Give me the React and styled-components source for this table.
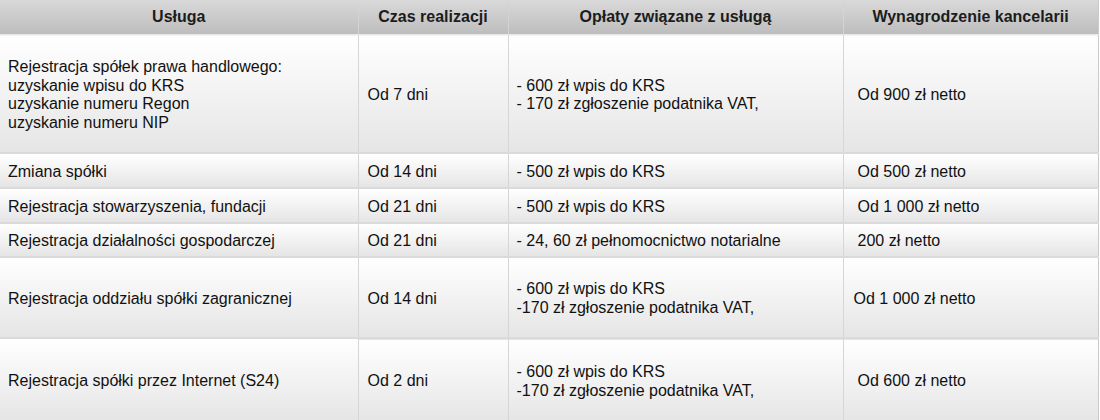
import React from 'react';
import styled, { createGlobalStyle } from 'styled-components';

const GlobalStyle = createGlobalStyle`
  body {
    margin: 0;
    background: #fff;
    font-family: "Liberation Sans", Arial, sans-serif;
  }
`;

const Table = styled.table`
  width: 1098px;
  border-collapse: collapse;
  table-layout: fixed;
  font-size: 16px;
  line-height: 18.7px;
  color: #111;
`;

const HeadCell = styled.th`
  height: 34px;
  padding: 0;
  font-weight: bold;
  text-align: center;
  color: #1c1c1c;
  background: linear-gradient(to bottom, #d9d9d9 0%, #bdbdbd 100%);
  border-right: 1px solid #d4d4d4;
  border-bottom: 1px solid #e9e9e9;
  &:last-child {
    border-right: 1px solid #c9c9c9;
  }
`;

const Row = styled.tr`
  height: ${(p) => p.$h}px;
`;

const Cell = styled.td`
  padding: 4px 0 0 ${(p) => p.$pad || 8}px;
  vertical-align: middle;
  background: linear-gradient(to bottom, #ffffff 0%, #e5e5e5 100%);
  border-right: 1px solid #d6d6d6;
  border-bottom: 2px solid #dadada;
  &:last-child {
    border-right: 1px solid #c9c9c9;
  }
`;

const rows = [
  {
    h: 118,
    cells: [
      ['Rejestracja spółek prawa handlowego:', 'uzyskanie wpisu do KRS', 'uzyskanie numeru Regon', 'uzyskanie numeru NIP'],
      ['Od 7 dni'],
      ['- 600 zł wpis do KRS', '- 170 zł zgłoszenie podatnika VAT,'],
      ['Od 900 zł netto'],
    ],
    pad4: 14,
  },
  { h: 35, cells: [['Zmiana spółki'], ['Od 14 dni'], ['- 500 zł wpis do KRS'], ['Od 500 zł netto']], pad4: 14 },
  { h: 35, cells: [['Rejestracja stowarzyszenia, fundacji'], ['Od 21 dni'], ['- 500 zł wpis do KRS'], ['Od 1 000 zł netto']], pad4: 14 },
  { h: 34, cells: [['Rejestracja działalności gospodarczej'], ['Od 21 dni'], ['- 24, 60 zł pełnomocnictwo notarialne'], ['200 zł netto']], pad4: 14 },
  {
    h: 81,
    cells: [
      ['Rejestracja oddziału spółki zagranicznej'],
      ['Od 14 dni'],
      ['- 600 zł wpis do KRS', '-170 zł zgłoszenie podatnika VAT,'],
      ['Od 1 000 zł netto'],
    ],
    pad4: 10,
  },
  {
    h: 84,
    cells: [
      ['Rejestracja spółki przez Internet (S24)'],
      ['Od 2 dni'],
      ['- 600 zł wpis do KRS', '-170 zł zgłoszenie podatnika VAT,'],
      ['Od 600 zł netto'],
    ],
    pad4: 14,
  },
];

const Lines = ({ lines }) => lines.map((l, i) => (
  <React.Fragment key={i}>
    {i > 0 && <br />}
    {l}
  </React.Fragment>
));

const App = () => (
  <>
    <GlobalStyle />
    <Table>
      <colgroup>
        <col style={{ width: 358 }} />
        <col style={{ width: 150 }} />
        <col style={{ width: 335 }} />
        <col style={{ width: 255 }} />
      </colgroup>
      <thead>
        <tr>
          <HeadCell>Usługa</HeadCell>
          <HeadCell>Czas realizacji</HeadCell>
          <HeadCell>Opłaty związane z usługą</HeadCell>
          <HeadCell>Wynagrodzenie kancelarii</HeadCell>
        </tr>
      </thead>
      <tbody>
        {rows.map((r, i) => (
          <Row key={i} $h={r.h}>
            <Cell $pad={8}><Lines lines={r.cells[0]} /></Cell>
            <Cell $pad={9}><Lines lines={r.cells[1]} /></Cell>
            <Cell $pad={8}><Lines lines={r.cells[2]} /></Cell>
            <Cell $pad={r.pad4}><Lines lines={r.cells[3]} /></Cell>
          </Row>
        ))}
      </tbody>
    </Table>
  </>
);

export default App;
